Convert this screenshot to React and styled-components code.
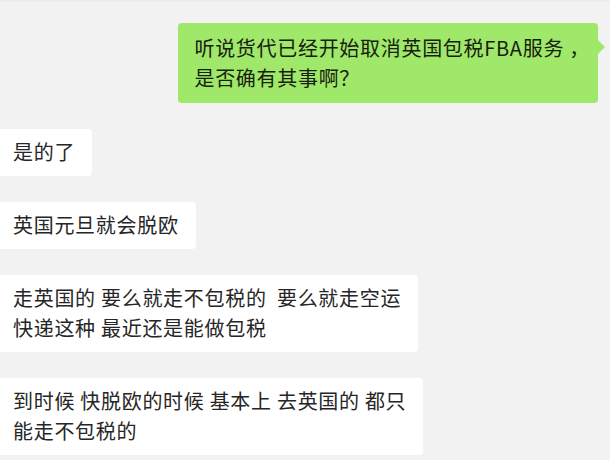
import React from 'react';
import styled, { createGlobalStyle } from 'styled-components';

// Chat content
const messages = [
  { id: 0, mine: true, lines: ['听说货代已经开始取消英国包税FBA服务 ，', '是否确有其事啊？'] },
  { id: 1, mine: false, lines: ['是的了'] },
  { id: 2, mine: false, lines: ['英国元旦就会脱欧'] },
  { id: 3, mine: false, lines: ['走英国的 要么就走不包税的  要么就走空运', '快递这种 最近还是能做包税'] },
  { id: 4, mine: false, lines: ['到时候 快脱欧的时候 基本上 去英国的 都只', '能走不包税的'] },
];

const GlobalStyle = createGlobalStyle`
  html, body {
    margin: 0;
    padding: 0;
    background: #f2f2f2;
    overflow: hidden;
  }
`;

const ChatWindow = styled.div`
  width: 610px;
  height: 460px;
  box-sizing: border-box;
  padding-top: 21px;
  display: flex;
  flex-direction: column;
  gap: 26px;
  background: #f2f2f2;
  border-top: 2px solid #ececec;
  font-family: "Noto Sans CJK SC", "Noto Sans", sans-serif;
  font-size: 20px;
  line-height: 30px;
  letter-spacing: 0.7px;
`;

const Row = styled.div`
  display: flex;
  justify-content: ${p => (p.$mine ? 'flex-end' : 'flex-start')};
  padding-right: ${p => (p.$mine ? '12px' : '0')};
`;

const Bubble = styled.div`
  position: relative;
  border-radius: 4px;
  white-space: pre;
  background: ${p => (p.$mine ? '#9fe86a' : '#ffffff')};
  color: ${p => (p.$mine ? '#18210f' : '#262626')};
  padding: ${p => (p.$mine ? '10px 8px 10px 16px' : '8px 17px 9px 18px')};
  margin-left: ${p => (p.$mine ? '0' : '-5px')};

  ${p =>
    p.$mine &&
    `
    &::after {
      content: '';
      position: absolute;
      right: -7px;
      top: 17px;
      border-style: solid;
      border-width: 7px 0 7px 7px;
      border-color: transparent transparent transparent #9fe86a;
    }
  `}
`;

function App() {
  return (
    <>
      <GlobalStyle />
      <ChatWindow>
        {messages.map(msg => (
          <Row key={msg.id} $mine={msg.mine}>
            <Bubble $mine={msg.mine}>
              {msg.lines.map((line, i) => (
                <React.Fragment key={i}>
                  {i > 0 && <br />}
                  {line}
                </React.Fragment>
              ))}
            </Bubble>
          </Row>
        ))}
      </ChatWindow>
    </>
  );
}

export default App;
